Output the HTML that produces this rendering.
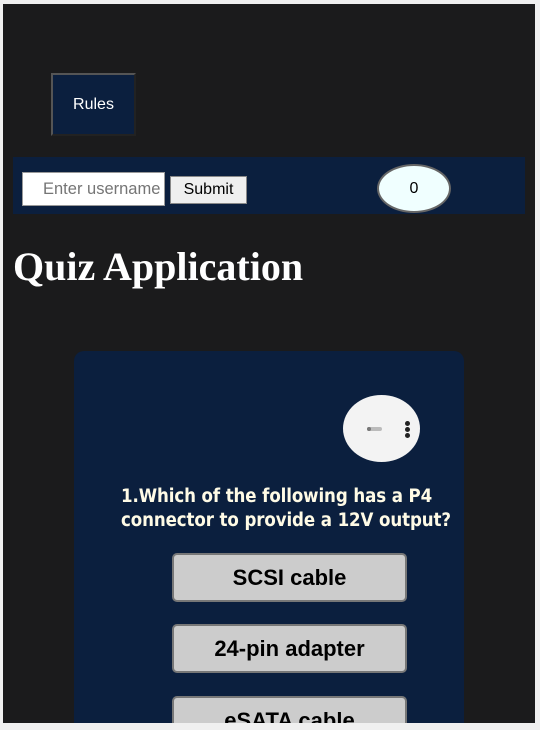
<!DOCTYPE html>
<html><head><style>
html,body{margin:0;padding:0;background:#f0f0f0;width:540px;height:730px;overflow:hidden}
#d{position:absolute;left:3px;top:4px;width:532px;height:719px;background:#1b1b1c;overflow:hidden;font-family:"Liberation Sans",sans-serif}
.a{position:absolute;box-sizing:border-box}
</style></head><body>
<div id="d">
<div class="a" style="left:48px;top:69px;width:85px;height:63px;background:#0b1f3e;border:2px solid #555;border-right-color:#222;border-bottom-color:#222;color:#fff;font-size:16px;text-align:center;line-height:59px">Rules</div>
<div class="a" style="left:10px;top:153px;width:512px;height:57px;background:#0b1f3e"></div>
<div class="a" style="left:19px;top:168px;width:143px;height:34px;background:#fff;border:1px solid #999;color:#757575;font-size:16.5px;line-height:32px;padding-left:20px;white-space:nowrap;overflow:hidden">Enter username</div>
<div class="a" style="left:167px;top:172px;width:77px;height:28px;background:#efefef;border:1px solid #888;color:#000;font-size:16px;text-align:center;line-height:26px">Submit</div>
<div class="a" style="left:374px;top:160px;width:74px;height:49px;background:#f0ffff;border:2px solid #666;border-radius:50%;text-align:center;line-height:45px;font-size:16px;color:#000">0</div>
<div class="a" style="left:10px;top:239px;font-family:'Liberation Serif',serif;font-weight:bold;font-size:40px;color:#fff;white-space:nowrap">Quiz Application</div>
<div class="a" style="left:71px;top:347px;width:390px;height:400px;background:#0b1f3e;border-radius:10px"></div>
<div class="a" style="left:340px;top:391px;width:77px;height:67px;background:#f3f3f3;border-radius:50%"></div>
<div class="a" style="left:364px;top:423px;width:15px;height:4px;background:#bbb;border-radius:2px"></div>
<div class="a" style="left:364px;top:423px;width:4px;height:4px;background:#777;border-radius:2px"></div>
<div class="a" style="left:402px;top:417px;width:5px;height:5px;background:#222;border-radius:50%"></div>
<div class="a" style="left:402px;top:423px;width:5px;height:5px;background:#222;border-radius:50%"></div>
<div class="a" style="left:402px;top:429px;width:5px;height:5px;background:#222;border-radius:50%"></div>
<div class="a" style="left:118px;top:481px;width:345px;color:#fffbe6;font-weight:bold;font-size:18.5px;line-height:24px;font-family:'DejaVu Sans Condensed','Liberation Sans',sans-serif;letter-spacing:-0.1px">1.Which of the following has a P4<br>connector to provide a 12V output?</div>
<div class="a" style="left:169px;top:549px;width:235px;height:49px;background:#ccc;border:2px solid #777;border-radius:5px;text-align:center;line-height:45px;font-size:22px;font-weight:bold;color:#000">SCSI cable</div>
<div class="a" style="left:169px;top:620px;width:235px;height:49px;background:#ccc;border:2px solid #777;border-radius:5px;text-align:center;line-height:45px;font-size:22px;font-weight:bold;color:#000">24-pin adapter</div>
<div class="a" style="left:169px;top:692px;width:235px;height:49px;background:#ccc;border:2px solid #777;border-radius:5px;text-align:center;line-height:45px;font-size:22px;font-weight:bold;color:#000">eSATA cable</div>
</div>
</body></html>
